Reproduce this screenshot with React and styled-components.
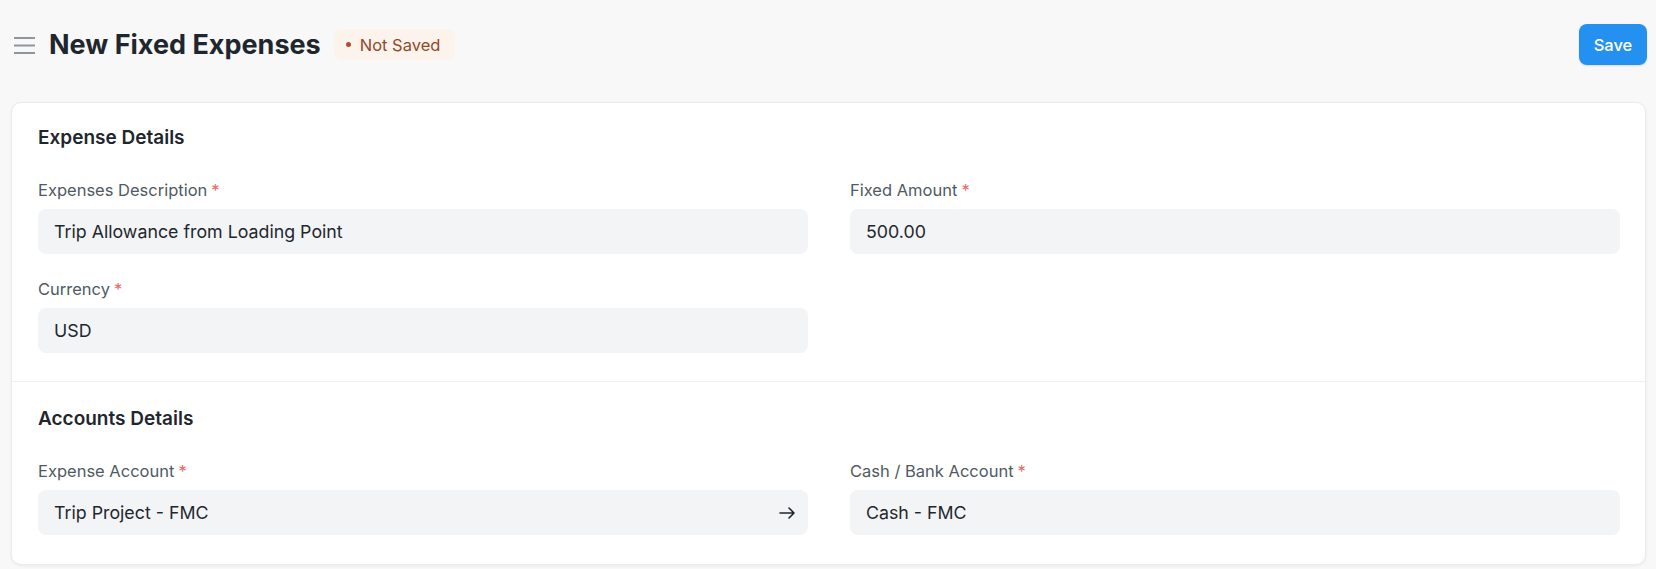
import React from "react"
import styled, { createGlobalStyle } from "styled-components"

const GlobalStyle = createGlobalStyle`
  html, body {
    margin: 0;
    padding: 0;
    background: #f8f8f8;
    font-family: Inter, "Noto Sans", sans-serif;
    color: #1f272e;
  }
`

const Page = styled.div`
  width: 1656px;
  min-height: 569px;
  background: #f8f8f8;
`

const Header = styled.div`
  display: flex;
  align-items: center;
  height: 41px;
  padding: 24px 9px 0 14px;
  margin-bottom: 37px;
`

const Burger = styled.button`
  display: flex;
  align-items: center;
  border: 0;
  background: none;
  padding: 0;
  margin-right: 14px;
  cursor: pointer;
`

const Title = styled.h1`
  margin: 0;
  font-size: 27px;
  font-weight: 700;
  color: #1f272e;
`

const Badge = styled.span`
  display: inline-flex;
  align-items: center;
  gap: 9px;
  margin-left: 13px;
  height: 31px;
  padding: 0 15px 0 12px;
  border-radius: 8px;
  background: #fdf3ed;
  color: #8f4a2a;
  font-size: 16.5px;
  &::before {
    content: "";
    width: 5px;
    height: 5px;
    border-radius: 50%;
    background: #a9522c;
  }
`

const Spacer = styled.div`
  flex: 1;
`

const SaveButton = styled.button`
  height: 41px;
  width: 68px;
  border: 0;
  border-radius: 8px;
  background: #2490ef;
  color: #fff;
  font-family: inherit;
  font-size: 16.5px;
  font-weight: 500;
  box-shadow: 0 1px 2px rgba(0, 0, 0, 0.12);
  cursor: pointer;
`

const Card = styled.div`
  margin: 0 10px 0 11px;
  background: #fff;
  border: 1px solid #ebebeb;
  border-radius: 10px;
  box-shadow: 0 1px 3px rgba(0, 0, 0, 0.06);
`

const Section = styled.section`
  padding: 23px 25px 28px 26px;
  & + & {
    border-top: 1px solid #f0f0f0;
    padding-top: 25px;
    padding-bottom: 29px;
  }
`

const SectionTitle = styled.h3`
  margin: 0 0 30px;
  font-size: 19px;
  line-height: 24px;
  font-weight: 600;
  color: #1f272e;
`

const Grid = styled.div`
  display: grid;
  grid-template-columns: 770px 770px;
  column-gap: 42px;
  row-gap: 25px;
`

const Field = styled.div`
  display: flex;
  flex-direction: column;
`

const Label = styled.label`
  font-size: 16.5px;
  line-height: 20px;
  color: #505a62;
  margin-bottom: 9px;
  span {
    color: #e46c6c;
    margin-left: 4px;
  }
`

const Input = styled.div`
  display: flex;
  align-items: center;
  justify-content: space-between;
  height: 45px;
  padding: 0 12px 0 16px;
  border-radius: 8px;
  background: #f3f4f5;
  font-size: 17.8px;
  color: #1f272e;
`

const ArrowIcon = () => (
  <svg width="17" height="14" viewBox="0 0 17 14" fill="none">
    <path d="M1 7h14M10 2l5 5-5 5" stroke="#1f272e" strokeWidth="1.6" strokeLinecap="round" strokeLinejoin="round" />
  </svg>
)

const MenuIcon = () => (
  <svg width="21" height="18" viewBox="0 0 21 18" fill="none">
    <path d="M0 2h21M0 9.5h21M0 17h21" stroke="#8e969e" strokeWidth="2" />
  </svg>
)

const sections = [
  {
    title: "Expense Details",
    fields: [
      { label: "Expenses Description", value: "Trip Allowance from Loading Point" },
      { label: "Fixed Amount", value: "500.00" },
      { label: "Currency", value: "USD" },
    ],
  },
  {
    title: "Accounts Details",
    fields: [
      { label: "Expense Account", value: "Trip Project - FMC", link: true },
      { label: "Cash / Bank Account", value: "Cash - FMC" },
    ],
  },
]

export default function App() {
  return (
    <Page>
      <GlobalStyle />
      <Header>
        <Burger aria-label="menu">
          <MenuIcon />
        </Burger>
        <Title>New Fixed Expenses</Title>
        <Badge>Not Saved</Badge>
        <Spacer />
        <SaveButton>Save</SaveButton>
      </Header>
      <Card>
        {sections.map((section) => (
          <Section key={section.title}>
            <SectionTitle>{section.title}</SectionTitle>
            <Grid>
              {section.fields.map((field) => (
                <Field key={field.label}>
                  <Label>
                    {field.label}
                    <span>*</span>
                  </Label>
                  <Input>
                    {field.value}
                    {field.link && <ArrowIcon />}
                  </Input>
                </Field>
              ))}
            </Grid>
          </Section>
        ))}
      </Card>
    </Page>
  )
}
